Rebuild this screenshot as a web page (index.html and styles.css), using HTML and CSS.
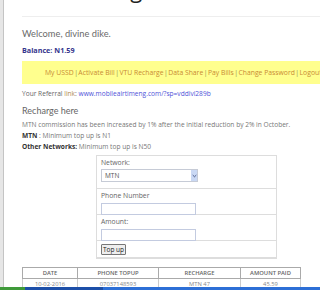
FILE: index.html
```html
<!DOCTYPE html>
<html>

<head>
    <link rel="stylesheet" href="styles.css">
</head>

<body>
    <div class="frame">
        <div class="edge"></div>
        <main class="page">
            <!-- heading, scrolled up -->
            <header class="heading">
                <div class="heading-text">Recharge</div>
            </header>

            <h2 class="welcome">Welcome, divine dike.</h2>
            <p class="balance">Balance: N1.59</p>

            <nav class="menu">
                <a href="#">My USSD</a><span class="sep">|</span><a href="#">Activate Bill</a><span class="sep">|</span><a href="#">VTU Recharge</a><span class="sep">|</span><a href="#">Data Share</a><span class="sep">|</span><a href="#">Pay Bills</a><span class="sep">|</span><a href="#">Change Password</a><span class="sep">|</span><a href="#">Logout</a>
            </nav>

            <p class="referral">Your Referral <span class="hl">link</span>: <a href="#">www.mobileairtimeng.com/?sp=vddivi289b</a></p>

            <h3 class="subtitle">Recharge here</h3>
            <div class="notes">
                <p>MTN commission has been increased by 1% after the initial reduction by 2% in October.</p>
                <p><b>MTN</b> : Minimum top up is N1</p>
                <p><b>Other Networks:</b> Minimum top up is N50</p>
            </div>

            <form class="topup">
                <div class="row row-first">
                    <label>Network:</label>
                    <div class="select">
                        <span>MTN</span>
                        <span class="arrow">
                            <svg width="7" height="5" viewBox="0 0 7 5"><path d="M1 1.2 L3.5 3.6 L6 1.2" fill="none" stroke="#3a4a7a" stroke-width="1.2"/></svg>
                        </span>
                    </div>
                </div>
                <div class="row">
                    <label>Phone Number</label>
                    <input type="text" class="field">
                </div>
                <div class="row">
                    <label>Amount:</label>
                    <input type="text" class="field">
                </div>
                <div class="row row-btn">
                    <button type="button" class="btn">Top up</button>
                </div>
                <div class="row row-last"></div>
            </form>

            <table class="history">
                <thead>
                    <tr>
                        <th class="c1">DATE</th>
                        <th class="c2">PHONE TOPUP</th>
                        <th class="c3">RECHARGE</th>
                        <th>AMOUNT PAID</th>
                    </tr>
                </thead>
                <tbody>
                    <tr>
                        <td>10-02-2016</td>
                        <td>07037148593</td>
                        <td>MTN 47</td>
                        <td>45.59</td>
                    </tr>
                </tbody>
            </table>
        </main>
    </div>

    <!-- windows taskbar -->
    <div class="taskbar">
        <div class="start"></div>
        <div class="task"></div>
    </div>
</body>

</html>
```

FILE: styles.css
```css
* {
    margin: 0;
    padding: 0;
    box-sizing: border-box;
}

body {
    font-family: "Open Sans", sans-serif;
    background-color: #fff;
    overflow: hidden;
    height: 290px;
}

.frame {
    display: flex;
    min-height: 290px;
}

.edge {
    width: 4px;
    flex-shrink: 0;
    background-color: #e6e6e6;
    border-right: 1px solid #c4c4c4;
}

.page {
    flex: 1;
    padding-left: 18px;
    min-width: 0;
}

.heading {
    height: 17px;
    border-bottom: 1px solid #eee;
    overflow: hidden;
}

.heading-text {
    margin-top: -26px;
    padding-left: 37px;
    font-size: 22px;
    line-height: 30px;
    color: #222;
}

.welcome {
    margin-top: 10px;
    font-family: Lato, sans-serif;
    font-size: 9.3px;
    font-weight: normal;
    line-height: 14px;
    color: #6a6a6a;
}

.balance {
    margin-top: 3px;
    font-size: 7.2px;
    font-weight: bold;
    line-height: 12px;
    color: #34348c;
}

.menu {
    margin-top: 5px;
    height: 23px;
    background-color: #ffff8e;
    padding-left: 23px;
    white-space: nowrap;
    overflow: hidden;
    font-size: 6.8px;
    line-height: 23px;
}

.menu a {
    color: #c98a34;
    text-decoration: none;
}

.menu .sep {
    color: #8d8f52;
    padding: 0 0.5px;
}

.referral {
    margin-top: 4px;
    font-size: 6.6px;
    line-height: 12px;
    color: #666;
}

.referral .hl {
    color: #b08a50;
}

.referral a {
    color: #4e52d8;
    text-decoration: none;
}

.subtitle {
    margin-top: 4px;
    font-family: Lato, sans-serif;
    font-size: 9px;
    font-weight: normal;
    line-height: 13px;
    color: #666;
}

.notes {
    margin-top: 2px;
    font-size: 6.6px;
    line-height: 11px;
    color: #777;
}

.notes b {
    color: #333;
}

.topup {
    margin: 3px 0 0 74px;
    width: 181px;
    border: 1px solid #ddd;
    border-bottom: none;
}

.row {
    display: flex;
    flex-direction: column;
    padding: 2px 0 2px 4px;
    border-bottom: 1px solid #ddd;
}

.row-first {
    height: 33px;
}

.row + .row {
    height: 26px;
}

.row + .row-btn {
    height: 17px;
    padding-top: 3px;
}

.row + .row-last {
    height: 0;
    padding: 0;
}

label {
    font-size: 6.8px;
    line-height: 9px;
    color: #666;
}

.select {
    margin-top: 2px;
    width: 97px;
    height: 13px;
    border: 1px solid #c6cbd6;
    display: flex;
    align-items: center;
    justify-content: space-between;
    font-size: 6.5px;
    color: #555;
    padding-left: 3px;
}

.arrow {
    width: 6px;
    height: 11px;
    background-color: #c9d8f4;
    display: flex;
    align-items: center;
    justify-content: center;
}

.arrow svg {
    width: 5px;
    height: 4px;
}

.field {
    margin-top: 3px;
    width: 95px;
    height: 12px;
    border: 1px solid #c3cbe0;
    background-color: #fff;
}

.btn {
    width: 25px;
    height: 11px;
    font-family: "Open Sans", sans-serif;
    font-size: 6.5px;
    line-height: 9px;
    color: #222;
    background-color: #eee;
    border: 1px solid #777;
    border-radius: 1px;
}

.history {
    margin-top: 8px;
    width: 279px;
    border-collapse: collapse;
    font-size: 5.8px;
    text-align: center;
}

.history th,
.history td {
    border: 1px solid #aaa;
    height: 11px;
    padding: 0;
    line-height: 9px;
}

.history th {
    font-weight: 600;
    color: #666;
}

.history td {
    border-color: #ccc;
    color: #888;
}

.history .c1 {
    width: 55px;
}

.history .c2 {
    width: 81px;
}

.history .c3 {
    width: 82px;
}

.taskbar {
    position: fixed;
    left: 0;
    right: 0;
    bottom: 0;
    height: 3px;
    display: flex;
    background-color: #2d6fd6;
}

.start {
    width: 25px;
    background-color: #3f9a3a;
}

.task {
    width: 78px;
    background-color: #1d4fa8;
}
```
